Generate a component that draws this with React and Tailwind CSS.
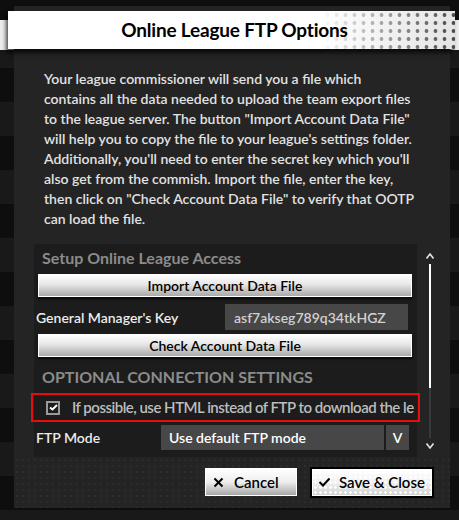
import React from 'react';

const font = { fontFamily: 'Lato, "Noto Sans", sans-serif' };

const lines = [
  'Your league commissioner will send you a file which',
  'contains all the data needed to upload the team export files',
  'to the league server. The button "Import Account Data File"',
  "will help you to copy the file to your league's settings folder.",
  "Additionally, you'll need to enter the secret key which you'll",
  'also get from the commish. Import the file, enter the key,',
  'then click on "Check Account Data File" to verify that OOTP',
  'can load the file.',
];

const GrayButton = ({ children }) => (
  <button className="h-[23px] w-full border border-white bg-[linear-gradient(to_bottom,#ffffff,#e6e6e6_45%,#a9a9a9)] text-[14px] font-semibold text-black shadow-[0_2px_2px_rgba(0,0,0,0.7)]">
    {children}
  </button>
);

const App = () => {
  return (
    <div
      className="relative h-[520px] w-[459px] overflow-hidden bg-[linear-gradient(to_bottom,transparent_20px,#ececec_20px,#ececec_50px,transparent_50px),repeating-linear-gradient(to_bottom,#0e0e0e_0px,#0e0e0e_34px,#191919_34px,#191919_68px)] pt-[6px]"
      style={font}
    >
      {/* Dialog */}
      <div className="ml-[14px] flex h-[502px] w-[436px] flex-col bg-[#242424]">
        {/* Title bar */}
        <div className="relative -ml-[6px] mt-[5px] flex h-[38px] w-[447px] items-center justify-center bg-[linear-gradient(to_right,#ffffff_70%,#e4e4e4)] shadow-[-2px_4px_4px_rgba(0,0,0,0.7)]">
          <div className="absolute inset-0 bg-[radial-gradient(circle,#4a4a4a_1.6px,transparent_2.2px)] bg-[length:9px_8px] [mask-image:linear-gradient(to_right,transparent_70%,black)]" />
          <h1 className="relative ml-[6px] text-[19px] font-bold tracking-[-0.2px] text-black">Online League FTP Options</h1>
        </div>

        {/* Description */}
        <div className="mt-[20px] pl-[30px] text-[14px] leading-[20px] font-semibold text-[#e2e2e2]">
          {lines.map((l) => (
            <div key={l} className="whitespace-nowrap">{l}</div>
          ))}
        </div>

        {/* Scroll area */}
        <div className="mt-[15px] flex h-[213px]">
          <div className="ml-[20px] flex w-[383px] flex-col bg-[#1c1c1c]">
            <div className="pl-[8px] pt-[3px] text-[16px] leading-[22px] font-bold text-[#8b8b8b]">Setup Online League Access</div>
            <div className="ml-[4px] mr-[5px] mt-[4px]">
              <GrayButton>Import Account Data File</GrayButton>
            </div>
            <div className="mt-[7px] flex h-[26px] items-center">
              <span className="pl-[2px] text-[14px] font-semibold text-[#ececec]">General Manager's Key</span>
              <div className="ml-auto mr-[9px] flex h-[26px] w-[183px] items-center bg-[#474747] pl-[9px] text-[14px] font-semibold text-[#d0d0d0]">
                asf7akseg789q34tkHGZ
              </div>
            </div>
            <div className="ml-[4px] mr-[5px] mt-[3px]">
              <GrayButton>Check Account Data File</GrayButton>
            </div>
            <div className="mt-[9px] pl-[8px] text-[16px] leading-[22px] font-bold text-[#8b8b8b]">OPTIONAL CONNECTION SETTINGS</div>
            <div className="-mx-[3px] mt-[5px] flex h-[29px] items-center overflow-hidden border-2 border-[#e80c0c] pl-[13px] pr-[7px]">
              <div className="flex h-[14px] w-[14px] shrink-0 items-center justify-center border-2 border-[#9a9a9a]">
                <svg width="9" height="7" viewBox="0 0 9 7">
                  <path d="M1 3.5 L3.5 5.5 L8 1" stroke="#ffffff" strokeWidth="2" fill="none" />
                </svg>
              </div>
              <span className="ml-[12px] whitespace-nowrap text-[15px] font-semibold tracking-[-0.5px] text-[#bdbdbd]">
                If possible, use HTML instead of FTP to download the le
              </span>
            </div>
            <div className="mt-[3px] flex h-[25px] items-center">
              <span className="w-[127px] shrink-0 whitespace-nowrap pl-[2px] text-[14px] font-semibold text-[#ececec]">FTP Mode</span>
              <div className="flex h-[25px] w-[223px] items-center bg-[#474747] pl-[8px] text-[14px] font-semibold text-white">
                Use default FTP mode
              </div>
              <div className="ml-[2px] flex h-[25px] w-[23px] items-center justify-center bg-[#474747] text-[14px] font-semibold text-white">V</div>
            </div>
          </div>
          {/* Scrollbar */}
          <div className="ml-[4px] flex w-[18px] flex-col items-center">
            <svg width="10" height="8" viewBox="0 0 10 8" className="mt-[8px]">
              <path d="M1.5 6.5 L5 2 L8.5 6.5" stroke="#e6e6e6" strokeWidth="1.6" fill="none" />
            </svg>
            <div className="mt-[4px] h-[124px] w-[2px] bg-white" />
            <div className="h-[50px] w-[2px] bg-[#3a3a3a]" />
            <svg width="10" height="8" viewBox="0 0 10 8" className="mt-[4px]">
              <path d="M1.5 1.5 L5 6 L8.5 1.5" stroke="#e6e6e6" strokeWidth="1.6" fill="none" />
            </svg>
          </div>
        </div>

        {/* Footer */}
        <div className="flex flex-1 items-center justify-end gap-[13px] bg-[radial-gradient(circle,#2c2c2c_1px,transparent_1.5px)] bg-[length:6px_6px] pb-[1px] pr-[16px]">
          <button className="flex h-[28px] w-[92px] items-center border border-white bg-[linear-gradient(to_bottom,#ffffff,#eeeeee_50%,#a8a8a8)] pl-[7px] text-[15px] font-semibold text-black">
            <svg width="11" height="11" viewBox="0 0 11 11">
              <path d="M1.5 1.5 L9.5 9.5 M9.5 1.5 L1.5 9.5" stroke="#000" strokeWidth="2" />
            </svg>
            <span className="ml-[10px]">Cancel</span>
          </button>
          <button className="flex h-[31px] w-[124px] items-center border-2 border-black bg-white p-[1px]">
            <div className="flex h-full w-full items-center bg-[radial-gradient(circle,#ffffff_1px,transparent_1.5px),linear-gradient(to_bottom,#ffffff,#f0f0f0_50%,#d2d2d2)] bg-[length:5px_5px,100%_100%] pl-[5px] text-[15px] font-semibold text-black">
              <svg width="13" height="10" viewBox="0 0 13 10">
                <path d="M1.5 5 L5 8.5 L11.5 1.5" stroke="#000" strokeWidth="2" fill="none" />
              </svg>
              <span className="ml-[8px]">Save &amp; Close</span>
            </div>
          </button>
        </div>
      </div>
    </div>
  );
};

export default App;
